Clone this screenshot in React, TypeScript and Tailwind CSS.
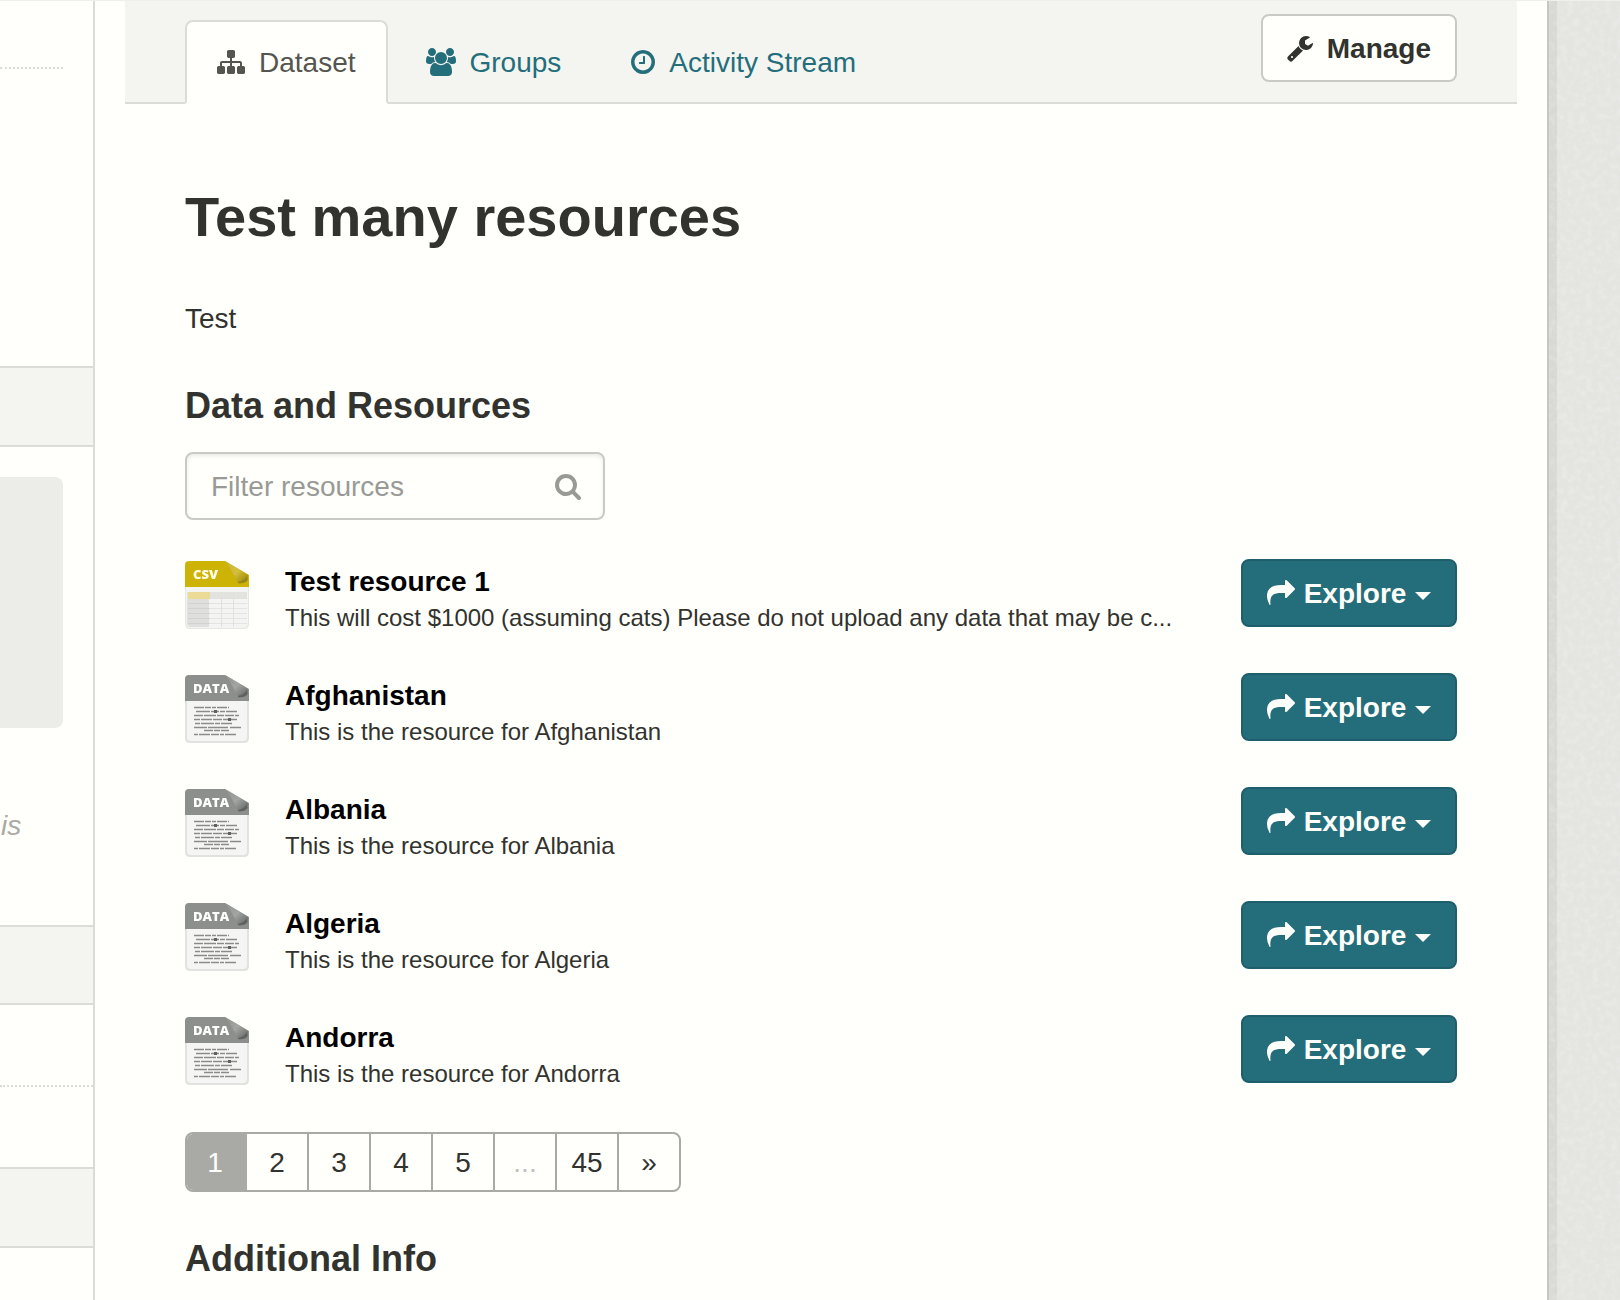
import React from "react";

type IconProps = { className?: string };

const SitemapIcon = ({ className }: IconProps) => (
  <svg viewBox="0 0 1792 1792" className={className} fill="currentColor" aria-hidden="true">
    <path d="M1792 1248v320q0 40-28 68t-68 28h-320q-40 0-68-28t-28-68v-320q0-40 28-68t68-28h96v-192h-512v192h96q40 0 68 28t28 68v320q0 40-28 68t-68 28h-320q-40 0-68-28t-28-68v-320q0-40 28-68t68-28h96v-192h-512v192h96q40 0 68 28t28 68v320q0 40-28 68t-68 28h-320q-40 0-68-28t-28-68v-320q0-40 28-68t68-28h96v-192q0-52 38-90t90-38h512v-192h-96q-40 0-68-28t-28-68v-320q0-40 28-68t68-28h320q40 0 68 28t28 68v320q0 40-28 68t-68 28h-96v192h512q52 0 90 38t38 90v192h96q40 0 68 28t28 68z" />
  </svg>
);

const GroupIcon = ({ className }: IconProps) => (
  <svg viewBox="0 0 1920 1792" className={className} fill="currentColor" aria-hidden="true">
    <path d="M593 896q-162 5-265 128h-134q-82 0-138-40.5t-56-118.5q0-353 124-353 6 0 43.5 21t97.5 42.5 119 21.5q67 0 133-23-5 37-5 66 0 139 81 256zm1071 637q0 120-73 189.5t-194 69.5h-874q-121 0-194-69.5t-73-189.5q0-53 3.5-103.5t14-109 26.5-108.5 43-97.5 62-81 85.5-53.5 111.5-20q10 0 43 21.5t73 48 107 48 135 21.5 135-21.5 107-48 73-48 43-21.5q61 0 111.5 20t85.5 53.5 62 81 43 97.5 26.5 108.5 14 109 3.5 103.5zm-1024-1277q0 106-75 181t-181 75-181-75-75-181 75-181 181-75 181 75 75 181zm704 384q0 159-112.5 271.5t-271.5 112.5-271.5-112.5-112.5-271.5 112.5-271.5 271.5-112.5 271.5 112.5 112.5 271.5zm576 225q0 78-56 118.5t-138 40.5h-134q-103-123-265-128 81-117 81-256 0-29-5-66 66 23 133 23 59 0 119-21.5t97.5-42.5 43.5-21q124 0 124 353zm-128-609q0 106-75 181t-181 75-181-75-75-181 75-181 181-75 181 75 75 181z" />
  </svg>
);

const ClockIcon = ({ className }: IconProps) => (
  <svg viewBox="128 0 1536 1792" className={className} fill="currentColor" aria-hidden="true">
    <path d="M1024 544v448q0 14-9 23t-23 9h-320q-14 0-23-9t-9-23v-64q0-14 9-23t23-9h224v-352q0-14 9-23t23-9h64q14 0 23 9t9 23zm416 352q0-148-73-273t-198-198-273-73-273 73-198 198-73 273 73 273 198 198 273 73 273-73 198-198 73-273zm224 0q0 209-103 385.5t-279.5 279.5-385.5 103-385.5-103-279.5-279.5-103-385.5 103-385.5 279.5-279.5 385.5-103 385.5 103 279.5 279.5 103 385.5z" />
  </svg>
);

const WrenchIcon = ({ className }: IconProps) => (
  <svg viewBox="64 0 1664 1792" className={className} fill="currentColor" aria-hidden="true">
    <path d="M448 1472q0-26-19-45t-45-19-45 19-19 45 19 45 45 19 45-19 19-45zm644-420l-682 682q-37 37-90 37-52 0-91-37l-106-108q-38-36-38-90 0-53 38-91l681-681q39 98 114.5 173.5t173.5 114.5zm634-435q0 39-23 106-47 134-164.5 217.5t-258.5 83.5q-185 0-316.5-131.5t-131.5-316.5 131.5-316.5 316.5-131.5q58 0 121.5 16.5t107.5 46.5q16 11 16 28t-16 28l-293 169v224l193 107q5-3 79-48.5t135.5-81 70.5-35.5q15 0 23.5 10t8.5 25z" />
  </svg>
);

const SearchIcon = ({ className }: IconProps) => (
  <svg viewBox="64 0 1664 1792" className={className} fill="currentColor" aria-hidden="true">
    <path d="M1216 832q0-185-131.5-316.5t-316.5-131.5-316.5 131.5-131.5 316.5 131.5 316.5 316.5 131.5 316.5-131.5 131.5-316.5zm512 832q0 52-38 90t-90 38q-54 0-90-38l-343-342q-179 124-399 124-143 0-273.5-55.5t-225-150-150-225-55.5-273.5 55.5-273.5 150-225 225-150 273.5-55.5 273.5 55.5 225 150 150 225 55.5 273.5q0 220-124 399l343 343q37 37 37 90z" />
  </svg>
);

const ShareIcon = ({ className }: IconProps) => (
  <svg viewBox="0 0 1792 1792" className={className} fill="currentColor" aria-hidden="true">
    <path d="M1792 640q0 26-19 45l-512 512q-19 19-45 19t-45-19-19-45v-256h-224q-98 0-175.5 6t-154 21.5-133 42.5-105.5 69.5-80 101-48.5 138.5-17.5 181q0 55 5 123 0 6 2.5 23.5t2.5 26.5q0 15-8.5 25t-23.5 10q-16 0-28-17-7-9-13-22t-13.5-30-10.5-24q-127-285-127-451 0-199 53-333 162-403 875-403h224v-256q0-26 19-45t45-19 45 19l512 512q19 19 19 45z" />
  </svg>
);

const CsvFileIcon = ({ className }: IconProps) => (
  <svg viewBox="0 0 64 68" className={className} role="img" aria-label="CSV file">
    <defs>
      <linearGradient id="csv-fold" x1="0" y1="0" x2="1" y2="1">
        <stop offset="0" stopColor="#c9b43a" />
        <stop offset="0.5" stopColor="#d3bf3f" />
        <stop offset="0.8" stopColor="#b09a12" />
        <stop offset="1" stopColor="#a38e10" />
      </linearGradient>
      <filter id="csv-soft">
        <feGaussianBlur stdDeviation="0.6" />
      </filter>
    </defs>
    <path d="M0 24h64v39q0 5-5 5H5q-5 0-5-5z" fill="#e6e7e4" />
    <path d="M1 26h62v36q0 5-5 5H6q-5 0-5-5z" fill="#f4f5f2" />
    <g filter="url(#csv-soft)">
      <path d="M2 31h60v7H2z" fill="#e2e3df" />
      <path d="M2 38h22v28H6q-4 0-4-4z" fill="#dfe0dd" />
      <path d="M3 31h22v7H3z" fill="#ecdb97" />
      <path d="M3 42.500h22M3 47.500h22M3 52.500h22M3 57.500h22M3 62.500h22" stroke="#d2d3d0" strokeWidth="1" />
      <path d="M25 42.500h37M25 47.500h37M25 52.500h37M25 57.500h37M25 62.500h37" stroke="#e4e5e2" strokeWidth="1" />
      <path d="M36.500 31v35M48.500 31v35" stroke="#e0e1de" strokeWidth="1" />
    </g>
    <path d="M0 4q0-4 4-4h36l24 14v12H0z" fill="#ccb306" />
    <g filter="url(#csv-soft)">
      <path d="M40 0l23 14v5q-3 4-10 3-2-4-5-10T40 0z" fill="url(#csv-fold)" />
      <path d="M53 21q6-1 9-6v4q-3 4-9 3z" fill="#94841a" />
      <text x="8" y="18" fontFamily="'Open Sans', sans-serif" fontWeight="800" fontSize="13" fill="#fffce6">CSV</text>
    </g>
  </svg>
);

const DataFileIcon = ({ className }: IconProps) => (
  <svg viewBox="0 0 64 68" className={className} role="img" aria-label="Data file">
    <defs>
      <linearGradient id="data-fold" x1="0" y1="0" x2="1" y2="1">
        <stop offset="0" stopColor="#8f918f" />
        <stop offset="0.5" stopColor="#a3a5a3" />
        <stop offset="0.8" stopColor="#7a7c7a" />
        <stop offset="1" stopColor="#6e706e" />
      </linearGradient>
      <filter id="data-soft">
        <feGaussianBlur stdDeviation="0.6" />
      </filter>
    </defs>
    <path d="M0 24h64v39q0 5-5 5H5q-5 0-5-5z" fill="#e2e3e0" />
    <path d="M2 26h60v36q0 4-4 4H6q-4 0-4-4z" fill="#f5f6f3" />
    <path d="M0 4q0-4 4-4h36l24 14v12H0z" fill="#8d8f8d" />
    <g filter="url(#data-soft)">
      <path d="M40 0l23 14v5q-3 4-10 3-2-4-5-10T40 0z" fill="url(#data-fold)" />
      <path d="M53 21q6-1 9-6v4q-3 4-9 3z" fill="#5e605e" />
    </g>
    <g filter="url(#data-soft)">
      <g stroke="#8a8c8a" strokeWidth="1.500" fill="none">
        <path d="M9 32.500h35" strokeDasharray="10 1 6 1 4 1" />
        <path d="M11 36.500h41" strokeDasharray="14 1 8 1 5 1" />
        <path d="M9 40.500h45" strokeDasharray="9 1 12 1 7 1" />
        <path d="M9 44.500h43" strokeDasharray="6 1 11 1 9 1" />
        <path d="M10 48.500h37" strokeDasharray="5 1 13 1" />
        <path d="M9 52.500h47" strokeDasharray="13 1 20 2" />
        <path d="M19 55.500h25" strokeDasharray="9 1 6 1" />
        <path d="M9 59.500h42" strokeDasharray="4 1 11 1 8 1" />
      </g>
      <path d="M29 35h3v3h-3zM43 43h3v3h-3z" fill="#606260" />
      <text x="8" y="18" fontFamily="'Open Sans', sans-serif" fontWeight="800" fontSize="13" fill="#ffffff">DATA</text>
    </g>
  </svg>
);

const resources = [
  {
    name: "Test resource 1",
    format: "csv",
    description: "This will cost $1000 (assuming cats) Please do not upload any data that may be c...",
  },
  { name: "Afghanistan", format: "data", description: "This is the resource for Afghanistan" },
  { name: "Albania", format: "data", description: "This is the resource for Albania" },
  { name: "Algeria", format: "data", description: "This is the resource for Algeria" },
  { name: "Andorra", format: "data", description: "This is the resource for Andorra" },
];

const pages = ["2", "3", "4", "5", "...", "45", "»"];

function Sidebar() {
  return (
    <aside className="w-[95px] shrink-0 overflow-hidden border-r-2 border-[#dbdcd8]">
      <div className="mr-[30px] h-[68px] border-b-2 border-dotted border-[#dbdcd8]" />
      <div className="mt-[297px] h-[81px] border-y-2 border-[#dbdcd8] bg-[#f4f5f1]" />
      <div className="mt-[30px] mr-[30px] h-[251px] rounded-r-lg bg-[#ecede9]" />
      <p className="mt-[78px] pl-px text-[28px] leading-10 text-[#a9aaa5] italic">is</p>
      <div className="mt-[79px] h-20 border-y-2 border-[#dbdcd8] bg-[#f4f5f1]" />
      <div className="h-[82px] border-b-2 border-dotted border-[#dbdcd8]" />
      <div className="mt-20 h-[81px] border-y-2 border-[#dbdcd8] bg-[#f4f5f1]" />
    </aside>
  );
}

function PageHeader() {
  return (
    <header className="flex items-start justify-between border-b-2 border-[#dbdcd8] bg-[#f4f5f1] px-[60px]">
      <nav className="-mb-0.5 flex gap-1.5 pt-[19px] text-[28px] leading-10 text-[#246e7b]">
        <a
          href="#dataset"
          aria-current="page"
          className="flex items-center gap-3.5 rounded-t-lg border-2 border-[#dbdcd8] border-b-[#fffffb] bg-[#fffffb] px-[30px] pt-[21px] pb-[19px] text-[#555550]"
        >
          <SitemapIcon className="mb-0.5 h-7 w-7" />
          Dataset
        </a>
        <a href="#groups" className="flex items-center gap-3.5 border-2 border-transparent px-[30px] pt-[21px] pb-[19px]">
          <GroupIcon className="mb-0.5 h-7 w-[30px]" />
          Groups
        </a>
        <a href="#activity" className="flex items-center gap-3.5 border-2 border-transparent px-[30px] pt-[21px] pb-[19px]">
          <ClockIcon className="mb-0.5 h-7 w-6" />
          Activity Stream
        </a>
      </nav>
      <button
        type="button"
        className="mt-[13px] flex items-center gap-3.5 rounded-lg border-2 border-[#c9cac6] bg-[#fffffb] px-6 pt-[13px] pb-[11px] text-[28px] leading-10 font-bold text-[#32322e]"
      >
        <WrenchIcon className="mb-0.5 h-7 w-[26px]" />
        Manage
      </button>
    </header>
  );
}

function ExploreButton() {
  return (
    <button
      type="button"
      className="flex w-[216px] shrink-0 items-center justify-between rounded-lg border-2 border-[#1f5f6b] bg-[#246e7b] px-6 pt-[13px] pb-[11px] text-[28px] leading-10 font-bold text-[#fffffb]"
    >
      <ShareIcon className="mb-0.5 h-7 w-7" />
      Explore
      <span className="mt-1 border-x-8 border-t-8 border-x-transparent border-t-[#fffffb]" />
    </button>
  );
}

function Pagination() {
  return (
    <nav aria-label="Pages" className="mt-[41px] flex">
      <ul className="flex h-[60px] overflow-hidden rounded-lg border-2 border-[#a9aaa6] text-[28px] leading-[58px] text-[#32322e]">
        <li className="w-[60px] bg-[#a9aaa6] text-center text-[#fffffb]">
          <a href="#page-1" aria-current="page" className="block pr-1">1</a>
        </li>
        {pages.map((page, i) => (
          <li
            key={page}
            className={
              i === pages.length - 1
                ? "w-[60px] text-center"
                : "w-[62px] border-r-2 border-[#a9aaa6] text-center"
            }
          >
            {page === "..." ? (
              <span className="text-[#c0c1bd]">...</span>
            ) : (
              <a href={"#page-" + page} className="block">{page}</a>
            )}
          </li>
        ))}
      </ul>
    </nav>
  );
}

function PaperEdge() {
  return (
    <div className="relative w-[73px] shrink-0 overflow-hidden border-l-2 border-[#c6c7c3] bg-[#e4e5e1]">
      <div className="h-full w-2 bg-[#d8d9d5]" />
      <svg className="absolute inset-0 h-full w-full opacity-20" aria-hidden="true">
        <filter id="grain">
          <feTurbulence type="fractalNoise" baseFrequency="0.16" numOctaves="3" seed="4" />
          <feColorMatrix values="0 0 0 0 1  0 0 0 0 1  0 0 0 0 1  2.400 0 0 0 -1" />
        </filter>
        <rect width="100%" height="100%" filter="url(#grain)" />
      </svg>
    </div>
  );
}

export default function App() {
  return (
    <div className="flex min-h-screen border-t border-[#efefec] bg-[#fffffb] font-['Liberation_Sans',Arial,sans-serif] text-[#32322e]">
      <Sidebar />
      <main className="min-w-0 flex-1 px-[30px]">
        <PageHeader />
        <div className="px-[60px] pt-[81px]">
          <h1 className="text-[56px] leading-[64px] font-bold">Test many resources</h1>
          <p className="mt-[50px] text-[28px] leading-10">Test</p>
          <h2 className="mt-[43px] text-[36px] leading-[48px] font-bold">Data and Resources</h2>
          <form className="relative mt-[22px] w-[420px]" onSubmit={(e) => e.preventDefault()}>
            <input
              type="text"
              aria-label="Filter resources"
              placeholder="Filter resources"
              className="block h-[68px] w-full rounded-lg border-2 border-[#c9cac6] bg-[#fffffb] pt-0.5 pr-16 pl-6 text-[28px] leading-10 shadow-[inset_0_2px_4px_rgba(0,0,0,0.09)] outline-none placeholder:text-[#999a96]"
            />
            <button type="submit" aria-label="Search" className="absolute inset-y-0 right-6 flex items-center text-[#999a96]">
              <SearchIcon className="h-7 w-[26px]" />
            </button>
          </form>
          <ul className="mt-[39px] flex flex-col gap-[38px]">
            {resources.map((r) => (
              <li key={r.name} className="flex items-start">
                {r.format === "csv" ? (
                  <CsvFileIcon className="mt-0.5 h-[68px] w-16 shrink-0" />
                ) : (
                  <DataFileIcon className="mt-0.5 h-[68px] w-16 shrink-0" />
                )}
                <div className="ml-9 min-w-0 flex-1 pt-1">
                  <a href="#resource" className="block text-[28px] leading-[38px] font-bold text-black">{r.name}</a>
                  <p className="truncate text-[24px] leading-[34px]">{r.description}</p>
                </div>
                <ExploreButton />
              </li>
            ))}
          </ul>
          <Pagination />
          <h2 className="mt-[43px] text-[36px] leading-[48px] font-bold">Additional Info</h2>
        </div>
      </main>
      <PaperEdge />
    </div>
  );
}
